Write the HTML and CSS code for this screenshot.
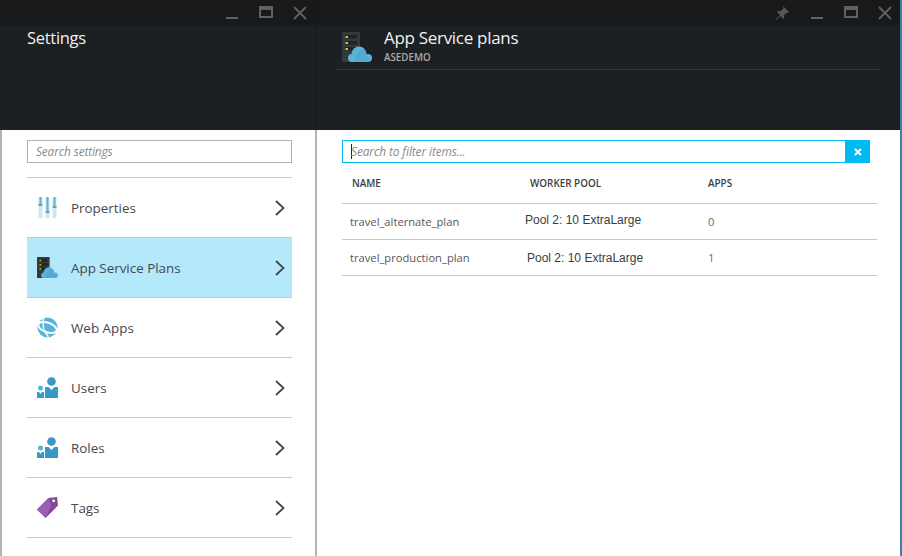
FILE: index.html
```html
<!DOCTYPE html>
<html lang="en">
<head>
    <meta charset="UTF-8">
    <meta name="viewport" content="width=device-width, initial-scale=1.0">
    <title>App Service plans</title>
    <link rel="stylesheet" href="styles.css">
</head>
<body>
    <svg class="defs" width="0" height="0">
        <symbol id="i-min" viewBox="0 0 14 14"><rect x="1" y="11" width="12" height="2" fill="#5f6163"/></symbol>
        <symbol id="i-max" viewBox="0 0 14 14"><path d="M0 0h14v12H0z M2 4v6h10V4z" fill="#5f6163" fill-rule="evenodd"/></symbol>
        <symbol id="i-close" viewBox="0 0 14 14"><path d="M1 1l12 12M13 1L1 13" stroke="#5f6163" stroke-width="1.8" fill="none"/></symbol>
        <symbol id="i-pin" viewBox="0 0 14 14"><path d="M8 0l6 6-1 1-1-.5-3 3 .3 2.500-1 1-3-3-4.300 4.500-.5-.5L5 9 2 6l1-1 2.500.3 3-3L8 1z" fill="#55575a"/></symbol>
        <symbol id="i-chev" viewBox="0 0 10 16"><path d="M1 1l7.500 7L1 15" stroke="#45484a" stroke-width="1.800" fill="none"/></symbol>
        <symbol id="i-x" viewBox="0 0 8 8"><path d="M1 1l6 6M7 1L1 7" stroke="#fff" stroke-width="2" fill="none"/></symbol>
        <symbol id="i-plan" viewBox="0 0 30 30">
            <rect x="0" y="0" width="18" height="30" fill="#36393b"/>
            <rect x="3" y="3" width="12" height="3.500" fill="#222"/>
            <rect x="3" y="9" width="12" height="3.500" fill="#222"/>
            <rect x="3" y="15" width="12" height="3.500" fill="#222"/>
            <rect x="3.500" y="4" width="2.500" height="2" fill="#b8d432"/>
            <rect x="3.500" y="10" width="2.500" height="2" fill="#b8d432"/>
            <rect x="3.500" y="16" width="2.500" height="2" fill="#b8d432"/>
            <circle cx="10" cy="26" r="4" fill="#59b4d9"/>
            <circle cx="17" cy="22" r="7.500" fill="#59b4d9"/>
            <circle cx="26" cy="26" r="4" fill="#59b4d9"/>
            <rect x="10" y="25" width="16" height="5" fill="#59b4d9"/>
            <path d="M13 30c-2-3-1-7 3-8 1-3 3-5 6-5 2 2 3 4 2 7 3 0 5 3 3 6z" fill="#4aa3cc" opacity=".55"/>
        </symbol>
        <symbol id="i-props" viewBox="0 0 20 21">
            <rect x="1" y="0" width="4" height="21" fill="#c6e9f5"/>
            <rect x="8" y="0" width="4" height="21" fill="#c6e9f5"/>
            <rect x="15" y="0" width="4" height="21" fill="#c6e9f5"/>
            <rect x="2" y="0" width="2" height="7" fill="#59b4d9"/>
            <rect x="9" y="0" width="2" height="14" fill="#59b4d9"/>
            <rect x="16" y="0" width="2" height="9" fill="#59b4d9"/>
            <rect x="1" y="7" width="4" height="2" fill="#8a9aa3"/>
            <rect x="8" y="14" width="4" height="2" fill="#8a9aa3"/>
            <rect x="15" y="9" width="4" height="2" fill="#8a9aa3"/>
        </symbol>
        <symbol id="i-web" viewBox="0 0 22 22">
            <circle cx="11" cy="11" r="10.500" fill="#59b4d9"/>
            <ellipse cx="11" cy="11" rx="10" ry="5" transform="rotate(20 11 11)" stroke="#fff" stroke-width="2" fill="none"/>
            <path d="M7 1c-2 6 0 14 5 20" stroke="#fff" stroke-width="1.600" fill="none"/>
            <circle cx="11" cy="11" r="3.500" fill="#59b4d9"/>
        </symbol>
        <symbol id="i-users" viewBox="0 0 21 21">
            <circle cx="14.500" cy="4.500" r="4.300" fill="#3999c6"/>
            <path d="M8 10h3.500l3 3 3-3H21v11H8z" fill="#3999c6"/>
            <circle cx="3.500" cy="11" r="2.500" fill="#59b4d9"/>
            <path d="M0 15h2l1.500 2L5 15h2v6H0z" fill="#3999c6"/>
        </symbol>
        <symbol id="i-tag" viewBox="0 0 22 22">
            <path d="M0 13L12 1l9-1 1 9-13 13z" fill="#804998"/>
            <path d="M0 13L12 1l3 8L9 22z" fill="#9a5fb0"/>
            <circle cx="17.500" cy="4" r="1.500" fill="#fff"/>
        </symbol>
    </svg>

    <section class="blade blade-settings">
        <header class="blade-head">
            <div class="titlebar">
                <svg class="tb-icon"><use href="#i-min"/></svg>
                <svg class="tb-icon"><use href="#i-max"/></svg>
                <svg class="tb-icon"><use href="#i-close"/></svg>
            </div>
            <h1 class="settings-title">Settings</h1>
        </header>
        <div class="settings-body">
            <div class="search-box">Search settings</div>
            <ul class="menu">
                <li class="menu-item"><svg class="menu-icon"><use href="#i-props"/></svg><span>Properties</span><svg class="chev"><use href="#i-chev"/></svg></li>
                <li class="menu-item selected"><svg class="menu-icon"><use href="#i-plan"/></svg><span>App Service Plans</span><svg class="chev"><use href="#i-chev"/></svg></li>
                <li class="menu-item"><svg class="menu-icon"><use href="#i-web"/></svg><span>Web Apps</span><svg class="chev"><use href="#i-chev"/></svg></li>
                <li class="menu-item"><svg class="menu-icon"><use href="#i-users"/></svg><span>Users</span><svg class="chev"><use href="#i-chev"/></svg></li>
                <li class="menu-item"><svg class="menu-icon"><use href="#i-users"/></svg><span>Roles</span><svg class="chev"><use href="#i-chev"/></svg></li>
                <li class="menu-item"><svg class="menu-icon"><use href="#i-tag"/></svg><span>Tags</span><svg class="chev"><use href="#i-chev"/></svg></li>
            </ul>
        </div>
    </section>

    <section class="blade blade-plans">
        <header class="blade-head">
            <div class="titlebar">
                <svg class="tb-icon tb-pin"><use href="#i-pin"/></svg>
                <svg class="tb-icon"><use href="#i-min"/></svg>
                <svg class="tb-icon"><use href="#i-max"/></svg>
                <svg class="tb-icon"><use href="#i-close"/></svg>
            </div>
            <div class="plans-title">
                <svg class="plans-icon"><use href="#i-plan"/></svg>
                <div>
                    <h1>App Service plans</h1>
                    <p>ASEDEMO</p>
                </div>
            </div>
        </header>
        <div class="plans-body">
            <div class="filter">
                <div class="filter-input"><i class="caret"></i>Search to filter items...</div>
                <button class="filter-clear"><svg class="clear-icon"><use href="#i-x"/></svg></button>
            </div>
            <table class="plans">
                <thead>
                    <tr><th>NAME</th><th>WORKER POOL</th><th>APPS</th></tr>
                </thead>
                <tbody>
                    <tr><td>travel_alternate_plan</td><td class="pool pool-a">Pool 2: 10 ExtraLarge</td><td class="count">0</td></tr>
                    <tr><td>travel_production_plan</td><td class="pool pool-b">Pool 2: 10 ExtraLarge</td><td class="count">1</td></tr>
                </tbody>
            </table>
        </div>
    </section>
</body>
</html>
```

FILE: styles.css
```css
* {
    box-sizing: border-box;
}
html, body {
    height: 100%;
}
body {
    margin: 0;
    display: flex;
    font-family: 'Open Sans', 'Noto Sans', sans-serif;
    background-color: #fff;
    color: #3a3d40;
    overflow: hidden;
}
.defs {
    position: absolute;
}
.blade {
    height: 100%;
    background-color: #fff;
}
.blade-settings {
    width: 317px;
}
.blade-plans {
    width: 585px;
    border-right: 2px solid #3c7fa6;
}
.blade-head {
    height: 130px;
    background-color: #1c2022;
}
.blade-settings .blade-head {
    border-right: 1px solid #141618;
}
.titlebar {
    height: 25px;
    background-color: #17191b;
    display: flex;
    justify-content: flex-end;
    align-items: center;
    gap: 20px;
    padding-right: 8px;
}
.blade-settings .titlebar {
    padding-right: 9px;
}
.tb-icon {
    width: 14px;
    height: 14px;
}
.tb-pin {
    margin-right: 1px;
}
.settings-title {
    margin: 0;
    padding: 1px 0 0 27px;
    font-size: 16.500px;
    font-weight: 400;
    color: #f0f0f0;
    letter-spacing: -0.3px;
}
.settings-body {
    height: calc(100% - 130px);
    border-left: 2px solid #b3b3b3;
    border-right: 2px solid #b3b3b3;
    padding: 10px 23px 0 25px;
}
.search-box {
    height: 23px;
    border: 1px solid #b3b3b3;
    padding-left: 8px;
    font-size: 11.800px;
    line-height: 21px;
    font-style: italic;
    color: #8a8a8a;
    letter-spacing: -0.1px;
}
.menu {
    list-style: none;
    margin: 14px 0 0;
    padding: 0;
    border-top: 1px solid #c8c8c8;
}
.menu-item {
    height: 60px;
    display: flex;
    align-items: center;
    padding: 0 7px 0 10px;
    border-bottom: 1px solid #c8c8c8;
    font-size: 13.400px;
    color: #45484a;
}
.menu-item span {
    flex: 1;
    margin-left: 13px;
}
.selected {
    background-color: #b3e9fb;
}
.menu-icon {
    width: 21px;
    height: 21px;
}
.chev {
    width: 10px;
    height: 16px;
}
.plans-title {
    display: flex;
    align-items: flex-start;
    gap: 12px;
    margin: 0 20px 0 20px;
    padding: 7px 0 6px 5px;
    height: 45px;
    border-bottom: 1px solid #34383a;
}
.plans-icon {
    width: 30px;
    height: 30px;
}
.plans-title h1 {
    margin: -5px 0 0;
    font-size: 17px;
    font-weight: 400;
    line-height: 22px;
    color: #f0f0f0;
    letter-spacing: -0.3px;
}
.plans-title p {
    margin: 3px 0 0;
    font-size: 9.800px;
    line-height: 12px;
    font-weight: 600;
    color: #a9abad;
}
.plans-body {
    padding: 10px 23px 0 25px;
}
.filter {
    display: flex;
    height: 23px;
    margin-right: 7px;
}
.filter-input {
    flex: 1;
    border: 1px solid #00bcf2;
    padding-left: 8px;
    font-size: 11.900px;
    line-height: 21px;
    font-style: italic;
    color: #8a8a8a;
    letter-spacing: -0.1px;
    display: flex;
    align-items: center;
}
.caret {
    width: 1px;
    height: 15px;
    margin-right: -1px;
    background-color: #222;
}
.filter-clear {
    width: 24px;
    border: none;
    padding: 0;
    background-color: #00bcf2;
    display: flex;
    align-items: center;
    justify-content: center;
}
.clear-icon {
    width: 8px;
    height: 8px;
}
.plans {
    width: 535px;
    border-collapse: collapse;
    table-layout: fixed;
}
.plans th {
    height: 40px;
    padding: 0 0 0 10px;
    text-align: left;
    font-size: 9.900px;
    font-weight: 600;
    color: #3a3d40;
    border-bottom: 1px solid #c8c8c8;
}
.plans th:nth-child(1), .plans th:nth-child(2) {
    width: 178px;
}
.plans td {
    height: 36px;
    padding: 1px 0 0 8px;
    font-size: 11.200px;
    color: #55585a;
    border-bottom: 1px solid #c8c8c8;
}
.plans td.pool {
    font-family: 'Liberation Sans', Arial, sans-serif;
    font-size: 12px;
    color: #3a3d40;
}
.plans td.pool-a {
    padding: 0 0 3px 5px;
}
.plans td.pool-b {
    padding: 2px 0 0 7px;
}
.plans td.count {
    padding-left: 10px;
    color: #6a6d70;
}
```
